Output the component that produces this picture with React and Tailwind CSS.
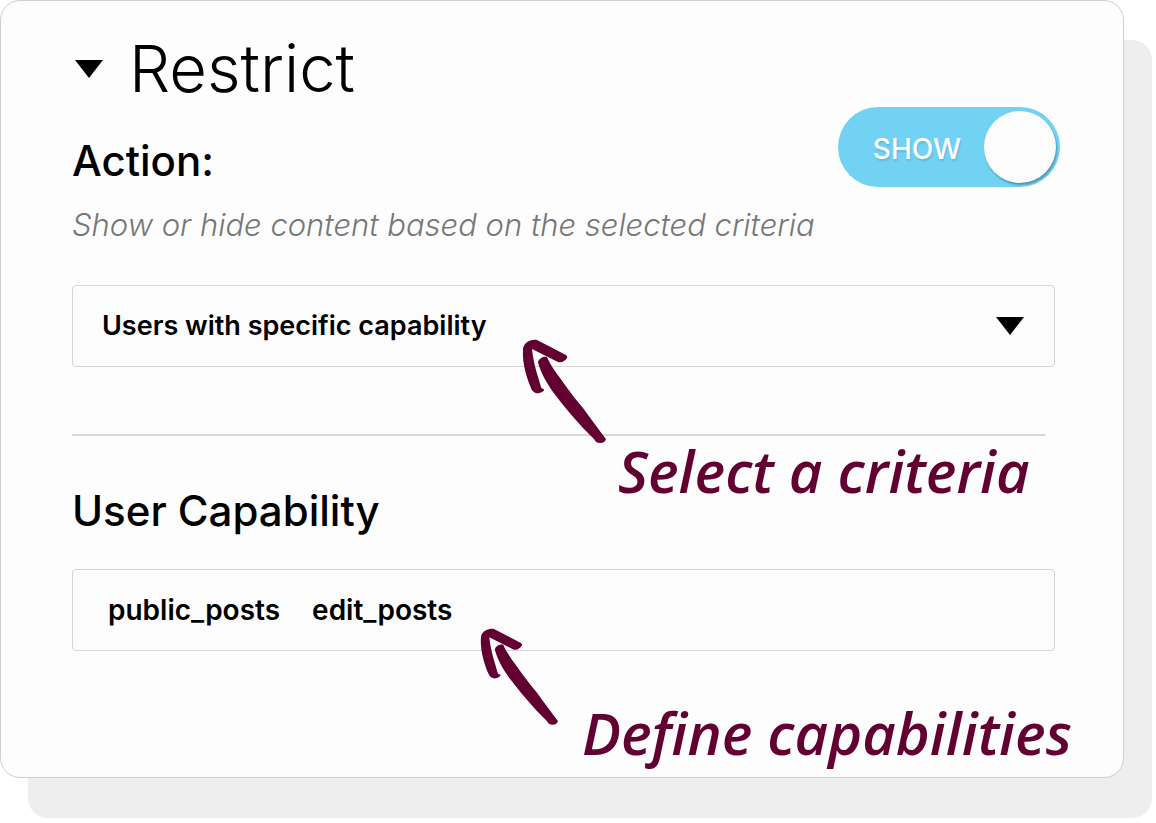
import { useState } from 'react';

const criteria = [
  'Users with specific capability',
  'Users with specific role',
  'Logged in users',
  'Logged out users',
];

const capabilities = ['public_posts', 'edit_posts'];

function Caret({ className }) {
  return (
    <svg viewBox="0 0 28 18" className={className} fill="currentColor" aria-hidden="true">
      <path d="M0 0h28L14 18z" />
    </svg>
  );
}

function Arrow({ className }) {
  return (
    <svg viewBox="0 0 84 104" className={className} fill="currentColor" aria-hidden="true">
      <path d="M15 0C8-1 1 3 1 10C0 23 5 39 9 48C11 54 17 54 20 52C22 51 22 50 22 49C19 49 19 47 17 40C13 28 11 18 10 9L36 22C40 23 43 21 45 18C46 16 44 15 42 14Z" />
      <path d="M16 22C17 18 22 16 25 17C27 22 32 30 38 38C45 48 54 60 61 68C69 79 77 90 84 99C83 102 81 103 78 103C75 103 74 102 72 99L61 88C50 76 40 64 31 52C24 42 18 31 16 22Z" />
    </svg>
  );
}

function ShowToggle({ checked, onChange }) {
  return (
    <label className="relative flex h-20 w-[222px] shrink-0 cursor-pointer items-center rounded-full bg-[#71d2f3] p-1">
      <input
        type="checkbox"
        role="switch"
        aria-label="Action"
        checked={checked}
        onChange={(e) => onChange(e.target.checked)}
        className="peer sr-only"
      />
      <span className="flex-1 pt-1 pl-2 text-center text-[28px] leading-8 font-medium text-white [text-shadow:1px_2px_2px_rgba(0,0,0,0.12)]">
        {checked ? 'SHOW' : 'HIDE'}
      </span>
      <span className="size-[72px] rounded-full bg-[#fcfcfc] shadow-[1px_2px_2px_rgba(0,0,0,0.3)] peer-checked:order-last" />
    </label>
  );
}

export default function App() {
  const [open, setOpen] = useState(true);
  const [show, setShow] = useState(true);
  const [selected, setSelected] = useState(criteria[0]);

  return (
    <main className="bg-white pr-8 pb-[45px] font-['Inter',sans-serif] text-black">
      <section className="rounded-[20px] border border-[#cfcfcf] bg-[#fdfdfd] pt-7 pr-[63px] pb-[126px] pl-[71px] shadow-[28px_40px_0_0_#eeeeee]">
        <h2>
          <button
            type="button"
            aria-expanded={open}
            onClick={() => setOpen(!open)}
            className="flex items-center gap-[26px] pl-[3px] text-[65px] leading-[80px] font-light"
          >
            <Caret className="w-7" />
            Restrict
          </button>
        </h2>

        <div className="-mt-0.5 flex items-start justify-between">
          <div className="pt-[30px]">
            <h3 className="text-[42px] leading-[48px] font-medium">Action:</h3>
            <p className="pt-5 text-[31px] leading-10 font-light whitespace-nowrap text-[#777777] italic">
              Show or hide content based on the selected criteria
            </p>
          </div>
          <ShowToggle checked={show} onChange={setShow} />
        </div>

        <div className="relative mt-10 mr-[5px]">
          <select
            aria-label="Criteria"
            value={selected}
            onChange={(e) => setSelected(e.target.value)}
            className="h-[82px] w-full appearance-none rounded border border-[#d5d5d5] bg-[#fcfcfc] pr-20 pl-[29px] text-[27px] font-semibold"
          >
            {criteria.map((c) => (
              <option key={c}>{c}</option>
            ))}
          </select>
          <Caret className="pointer-events-none absolute top-8 right-[31px] w-7" />
          <div className="pointer-events-none absolute top-[55px] left-[450px] flex items-end gap-3 text-[#620031]">
            <Arrow className="w-[84px] shrink-0 overflow-visible" />
            <span className="-mb-[62px] font-['Open_Sans',sans-serif] text-[58px] leading-[70px] font-semibold whitespace-nowrap italic">
              Select a criteria
            </span>
          </div>
        </div>

        <hr className="mt-[67px] mr-[15px] border-t-2 border-[#d8d8d8]" />

        <label htmlFor="capability" className="block pt-[51px] text-[42px] leading-[48px] font-medium">
          User Capability
        </label>
        <div className="relative mt-[34px] mr-[5px]">
          <div className="flex h-[82px] items-center gap-8 rounded border border-[#d5d5d5] bg-[#fcfcfc] px-[35px] text-[28px] font-semibold">
            {capabilities.map((c) => (
              <span key={c}>{c}</span>
            ))}
            <input id="capability" type="text" className="min-w-0 flex-1 bg-transparent outline-none" />
          </div>
          <div className="pointer-events-none absolute top-[60px] left-[408px] flex items-end gap-6 text-[#620031]">
            <Arrow className="w-[78px] shrink-0 overflow-visible" />
            <span className="-mb-[42px] font-['Open_Sans',sans-serif] text-[58px] leading-[70px] font-semibold whitespace-nowrap italic">
              Define capabilities
            </span>
          </div>
        </div>
      </section>
    </main>
  );
}
